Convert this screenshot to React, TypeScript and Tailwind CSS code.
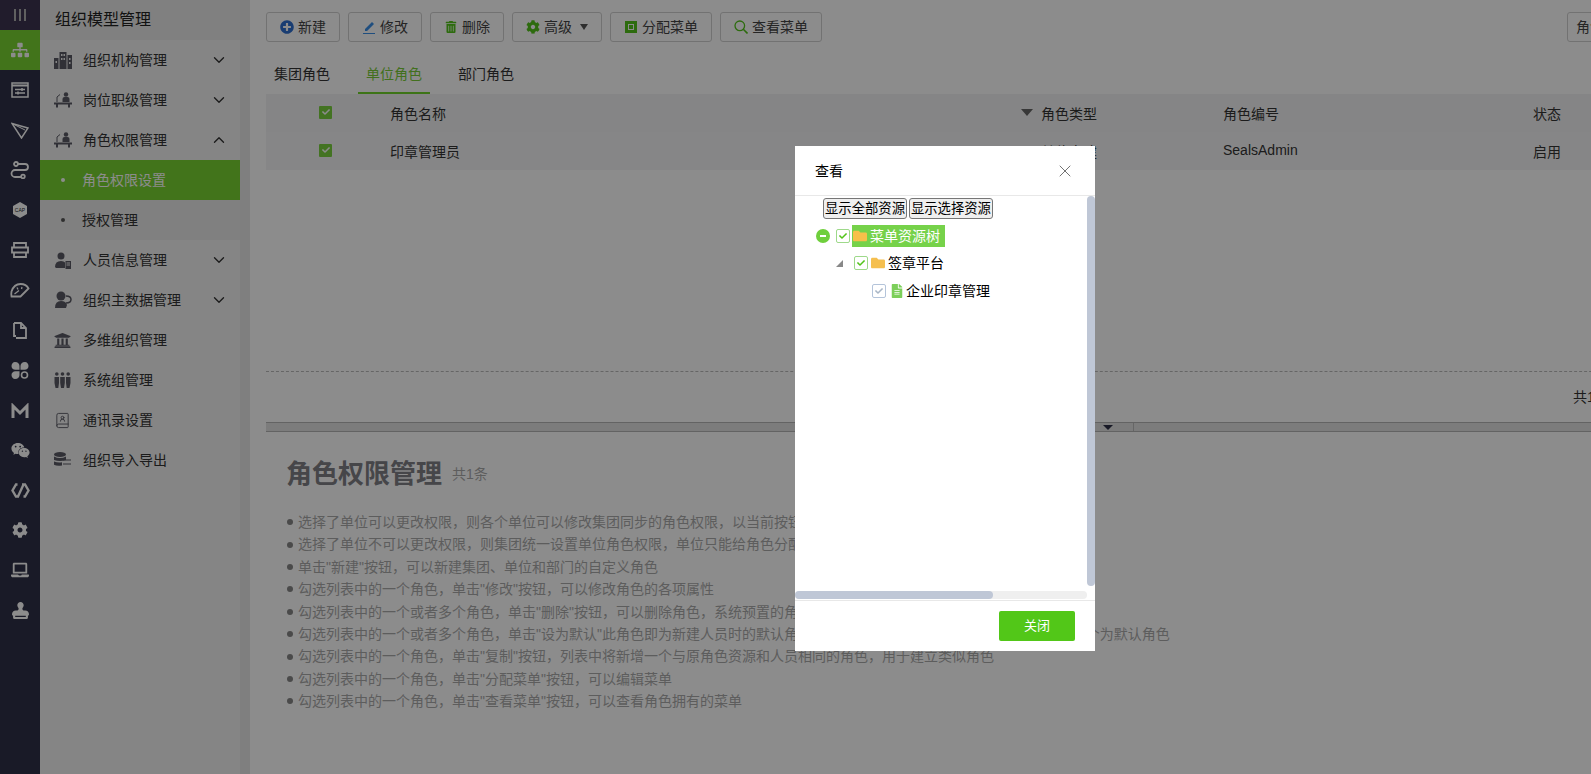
import { ChevronDown, ChevronUp, BookUser, X } from "lucide-react";
import {
  FaSitemap,
  FaWeixin,
  FaCog,
  FaLaptop,
  FaUniversity,
  FaPlusCircle,
  FaTrashAlt,
  FaFolder,
  FaFileAlt,
  FaCheck,
} from "react-icons/fa";
import { FaStamp } from "react-icons/fa6";
import { ReactNode } from "react";

const font = { fontFamily: '"Liberation Sans","Noto Sans CJK SC",sans-serif' };

const Desk = () => (
  <svg width="18" height="16" viewBox="0 0 18 16" fill="currentColor">
    <circle cx="12" cy="2.500" r="2.200" />
    <path d="M8.500 10V7q0-2 2-2h3q2 0 2 2v3z" />
    <path d="M0 10.500h18v2H16v3h-2v-3H4v3H2v-3H0z" />
    <path d="M3 10V5l3-2.500" fill="none" stroke="currentColor" strokeWidth="1" />
  </svg>
);

const Buildings = () => (
  <svg width="18" height="17" viewBox="0 0 18 17" fill="currentColor">
    <path d="M5.500 0h7v17h-7zM0 6h4.500v11H0zM13.500 3H18v14h-4.500z" />
    <path d="M7 2h1.500v2H7zM9.500 2H11v2H9.500zM7 6h1.500v2H7zM9.500 6H11v2H9.500zM1.500 9h1.500v2H1.500zM15 6h1.500v2H15zM15 10h1.500v2H15z" fill="#f2f2f2" />
  </svg>
);

const PersonCard = () => (
  <svg width="17" height="17" viewBox="0 0 17 17" fill="currentColor">
    <circle cx="7" cy="4" r="3.500" />
    <path d="M1 15q0-6 6-6 3 0 4 1.500V16H2z" />
    <path d="M11.500 9H17v8h-5.500z" />
    <path d="M12.500 11h3.500M12.500 13h3.500" stroke="#f2f2f2" strokeWidth="1" />
  </svg>
);

const PersonData = () => (
  <svg width="18" height="18" viewBox="0 0 18 18" fill="currentColor">
    <circle cx="7" cy="5" r="4.500" />
    <path d="M1 17q0-7 6-7 5 0 6 4l-1 3z" />
    <path d="M12 5q5 0 5 3.500T12 12" fill="none" stroke="currentColor" strokeWidth="1.500" />
  </svg>
);

const Team = () => (
  <svg width="17" height="16" viewBox="0 0 17 16" fill="currentColor">
    <circle cx="2.800" cy="2" r="1.800" />
    <circle cx="8.500" cy="2" r="1.800" />
    <circle cx="14.200" cy="2" r="1.800" />
    <path d="M.5 5h4.500v6l-.7 5H1.500l-1-5zM6.200 5h4.600v6l-.8 5H7l-.8-5zM12 5h4.500v6l-1 5h-2.800L12 11z" />
  </svg>
);

const ImportExport = () => (
  <svg width="17" height="16" viewBox="0 0 17 16" fill="currentColor">
    <ellipse cx="6" cy="2.500" rx="6" ry="2.500" />
    <path d="M0 4.500q6 3 12 0V8q-6 2-12 0zM0 9.500q4 1.500 8 .8v3.200q-5 1-8-.8z" />
    <path d="M9 8h8M9 12h8" stroke="currentColor" strokeWidth="1.200" />
  </svg>
);

const railIcons: ReactNode[] = [
  <svg width="18" height="16" viewBox="0 0 18 16" fill="none" stroke="currentColor" strokeWidth="1.500">
    <rect x="1" y="1" width="16" height="14" />
    <path d="M1 3.500h16" strokeWidth="2" />
    <path d="M4 7.500h10M4 11h10" />
    <path d="M11 6v3M7 9.500v3" />
  </svg>,
  <svg width="18" height="17" viewBox="0 0 18 17" fill="none" stroke="currentColor" strokeWidth="1.500">
    <path d="M1 1.500 17 6l-6.500 10z" />
    <path d="M1 1.500 14 8" strokeWidth="1" />
  </svg>,
  <svg width="20" height="18" viewBox="0 0 20 18" fill="none" stroke="currentColor" strokeWidth="1.800">
    <path d="M8 3h7a3 3 0 0 1 0 6H5a3.500 3.500 0 0 0 0 7h6" />
    <circle cx="6" cy="3" r="2" />
    <circle cx="13" cy="15.500" r="1.800" />
  </svg>,
  <svg width="16" height="16" viewBox="0 0 16 16">
    <path d="M8 0l7 4v8l-7 4-7-4V4z" fill="currentColor" />
    <text x="8" y="10" fontSize="5" textAnchor="middle" fill="#1b1c28">CAP</text>
  </svg>,
  <svg width="18" height="16" viewBox="0 0 18 16" fill="none" stroke="currentColor" strokeWidth="1.800">
    <path d="M3 1h12v4.500H3zM1 5.500h16v5H1zM3 10.500h12V15H3z" />
  </svg>,
  <svg width="20" height="16" viewBox="0 0 20 16" fill="none" stroke="currentColor" strokeWidth="1.800">
    <path d="M1.500 14.500q-.5-2 0-5C3 5 6 2 10.500 2c3.500 0 6.500 1.500 8 4.500l-8 8z" />
    <path d="M4.500 12 9 8.500M7 5.500l1 2M12 5l-.5 2" strokeWidth="1.300" />
  </svg>,
  <svg width="14" height="17" viewBox="0 0 14 17" fill="none" stroke="currentColor" strokeWidth="1.800">
    <path d="M1 1h7l5 5v10H3" />
    <path d="M1 1v13h2M8 1v5h5" />
  </svg>,
  <svg width="18" height="17" viewBox="0 0 18 17" fill="currentColor">
    <path d="M4 0c3 0 4.500 2 4.500 4v3.800H4.500C2 7.800.5 6 .5 4S2 0 4 0zM14 0c-3 0-4.500 2-4.500 4v3.800h4c2.500 0 4-1.800 4-3.800S16 0 14 0zM4 17c3 0 4.500-2 4.500-4V9.200H4.500C2 9.200.5 11 .5 13s1.500 4 3.500 4z" />
    <circle cx="13.500" cy="13" r="3" fill="none" stroke="currentColor" strokeWidth="1.600" />
  </svg>,
  <svg width="18" height="15" viewBox="0 0 18 15" fill="none" stroke="currentColor" strokeWidth="3">
    <path d="M2 15V3l7 7 7-7v12" />
  </svg>,
  <FaWeixin size={19} />,
  <svg width="19" height="15" viewBox="0 0 19 15" fill="none" stroke="currentColor" strokeWidth="2.400">
    <path d="M6.500 1.500H5L1.500 7.500 5 13.500h3" />
    <path d="M11 1.500h3l3.500 6-3.500 6h-1.500" />
    <path d="M12.500 1.500 7 13.500" />
  </svg>,
  <FaCog size={16} />,
  <FaLaptop size={18} />,
  <FaStamp size={17} />,
];

type MenuItem = { label: string; icon: ReactNode; arrow?: "down" | "up"; children?: { label: string; active?: boolean }[] };

const menu: MenuItem[] = [
  { label: "组织机构管理", icon: <Buildings />, arrow: "down" },
  { label: "岗位职级管理", icon: <Desk />, arrow: "down" },
  {
    label: "角色权限管理",
    icon: <Desk />,
    arrow: "up",
    children: [{ label: "角色权限设置", active: true }, { label: "授权管理" }],
  },
  { label: "人员信息管理", icon: <PersonCard />, arrow: "down" },
  { label: "组织主数据管理", icon: <PersonData />, arrow: "down" },
  { label: "多维组织管理", icon: <FaUniversity size={17} /> },
  { label: "系统组管理", icon: <Team /> },
  { label: "通讯录设置", icon: <BookUser size={17} strokeWidth={1.3} /> },
  { label: "组织导入导出", icon: <ImportExport /> },
];

const tips = [
  "选择了单位可以更改权限\uFF0C则各个单位可以修改集团同步的角色权限\uFF0C以当前按钮的选择为准",
  "选择了单位不可以更改权限\uFF0C则集团统一设置单位角色权限\uFF0C单位只能给角色分配人员",
  "单击\"新建\"按钮\uFF0C可以新建集团、单位和部门的自定义角色",
  "勾选列表中的一个角色\uFF0C单击\"修改\"按钮\uFF0C可以修改角色的各项属性",
  "勾选列表中的一个或者多个角色\uFF0C单击\"删除\"按钮\uFF0C可以删除角色\uFF0C系统预置的角色不能删除",
  "勾选列表中的一个或者多个角色\uFF0C单击\"设为默认\"此角色即为新建人员时的默认角色\uFF0C每个单位下同一类型的角色中, 只能设置一个为默认角色",
  "勾选列表中的一个角色\uFF0C单击\"复制\"按钮\uFF0C列表中将新增一个与原角色资源和人员相同的角色\uFF0C用于建立类似角色",
  "勾选列表中的一个角色\uFF0C单击\"分配菜单\"按钮\uFF0C可以编辑菜单",
  "勾选列表中的一个角色\uFF0C单击\"查看菜单\"按钮\uFF0C可以查看角色拥有的菜单",
];

const ToolButton = ({ icon, label, caret }: { icon: ReactNode; label: string; caret?: boolean }) => (
  <button className="flex h-[30px] items-center gap-1 rounded-[3px] border border-[#d0d0d0] bg-white px-[13px] text-sm leading-none text-[#444]">
    <span className="flex w-[14px] justify-center">{icon}</span>
    {label}
    {caret && <span className="ml-1 h-0 w-0 border-x-4 border-t-[6px] border-x-transparent border-t-[#555]" />}
  </button>
);

const TableCheck = () => (
  <span className="-mt-1 ml-[53px] flex h-[13px] w-[13px] items-center justify-center rounded-[1px] bg-[#7ad13f] text-white">
    <FaCheck size={8} />
  </span>
);

const TreeCheck = ({ muted }: { muted?: boolean }) => (
  <span
    className={
      muted
        ? "flex h-[14px] w-[14px] shrink-0 items-center justify-center rounded-[2px] border border-[#b4c4da] bg-white text-[#a9b6c6]"
        : "flex h-[14px] w-[14px] shrink-0 items-center justify-center rounded-[2px] border border-[#9ed98a] bg-white text-[#52c41a]"
    }
  >
    <FaCheck size={8} />
  </span>
);

const App = () => {
  return (
    <div className="relative flex h-[774px] w-[1591px] overflow-hidden bg-white text-sm" style={font}>
      {/* left rail */}
      <aside className="flex w-10 shrink-0 flex-col bg-[#2f3147] text-white">
        <div className="flex h-[30px] items-center justify-center gap-[3px] bg-[#3d3350]">
          <span className="h-3 w-[2px] bg-[#b0b0b0]" />
          <span className="h-3 w-[2px] bg-[#b0b0b0]" />
          <span className="h-3 w-[2px] bg-[#b0b0b0]" />
        </div>
        <div className="flex h-10 items-center justify-center bg-[#78d432]">
          <FaSitemap size={18} />
        </div>
        {railIcons.map((icon, i) => (
          <div key={i} className="flex h-10 items-center justify-center">
            {icon}
          </div>
        ))}
      </aside>

      {/* menu */}
      <aside className="w-[200px] shrink-0 bg-[#f2f2f2] text-[#333]">
        <div className="flex h-10 items-center bg-[#e9e9e9] pl-[15px] text-base text-[#222]">组织模型管理</div>
        {menu.map((item) => (
          <div key={item.label}>
            <div className="flex h-10 items-center pl-[14px] pr-[12px]">
              <span className="flex w-[29px] shrink-0 text-[#5a5a64]">{item.icon}</span>
              <span>{item.label}</span>
              {item.arrow === "down" && <ChevronDown size={18} strokeWidth={1.8} className="ml-auto" />}
              {item.arrow === "up" && <ChevronUp size={18} strokeWidth={1.8} className="ml-auto" />}
            </div>
            {item.children?.map((sub) => (
              <div
                key={sub.label}
                className={
                  sub.active
                    ? "flex h-10 items-center bg-[#78d432] pl-[21px] text-white"
                    : "flex h-10 items-center bg-[#e9e9e9] pl-[21px] text-[#333]"
                }
              >
                <span className={sub.active ? "mr-[17px] h-1 w-1 rounded-full bg-white" : "mr-[17px] h-1 w-1 rounded-full bg-[#555]"} />
                {sub.label}
              </div>
            ))}
          </div>
        ))}
      </aside>
      <div className="w-[10px] shrink-0 bg-[#e7e7e7]" />

      {/* content */}
      <main className="min-w-0 flex-1 overflow-hidden">
        <div className="w-[1417px]">
          <div className="ml-4 flex items-center gap-2 pt-3">
            <ToolButton icon={<FaPlusCircle size={14} className="text-[#2f6fd0]" />} label="新建" />
            <ToolButton
              icon={
                <svg width="14" height="14" viewBox="0 0 14 14" fill="#3a8ee8">
                  <path d="M3 9 10 2l2 2-7 7H3zM1 13h12v1H1z" />
                </svg>
              }
              label="修改"
            />
            <ToolButton icon={<FaTrashAlt size={12} className="text-[#52c41a]" />} label="删除" />
            <ToolButton icon={<FaCog size={14} className="text-[#52c41a]" />} label="高级" caret />
            <ToolButton
              icon={
                <span className="flex h-3 w-3 items-center justify-center bg-[#52c41a]">
                  <span className="h-[6px] w-[6px] border border-white" />
                </span>
              }
              label="分配菜单"
            />
            <ToolButton
              icon={
                <svg width="14" height="14" viewBox="0 0 14 14" fill="none" stroke="#52c41a" strokeWidth="1.300">
                  <circle cx="5.800" cy="5.800" r="4.800" />
                  <path d="M9.300 9.300 13.500 13.500" strokeWidth="1.600" />
                </svg>
              }
              label="查看菜单"
            />
            <div className="ml-auto flex h-[30px] w-[100px] items-center rounded-[3px] border border-[#d0d0d0] px-2 text-[#444]">角色名称</div>
          </div>

          <div className="ml-4 mt-[14px] flex h-[38px] text-[#333]">
            <div className="flex w-[92px] items-center pb-[2px] pl-2">集团角色</div>
            <div className="flex w-[72px] items-center justify-center border-b-2 border-[#6fd32a] text-[#78cc38]">单位角色</div>
            <div className="flex items-center pb-[2px] pl-7">部门角色</div>
          </div>

          <div className="ml-4 border-b border-dashed border-[#bbb]">
            <div className="grid h-[38px] grid-cols-[124px_651px_182px_310px_1fr] items-center bg-[#f3f3f4] pt-[2px] text-[#333]">
              <TableCheck />
              <span className="flex items-center justify-between pr-[8px]">
                角色名称
                <span className="-mt-1 h-0 w-0 border-x-[6px] border-t-[7px] border-x-transparent border-t-[#666]" />
              </span>
              <span>角色类型</span>
              <span>角色编号</span>
              <span>状态</span>
            </div>
            <div className="grid h-[38px] grid-cols-[124px_651px_182px_310px_1fr] items-center bg-[#f5f5f6] pt-[2px] text-[#333]">
              <TableCheck />
              <span>印章管理员</span>
              <span>单位自建</span>
              <span className="-mt-1">SealsAdmin</span>
              <span className="-mt-[1px]">启用</span>
            </div>
            <div className="h-[201px]" />
          </div>

          <div className="ml-4 flex h-[50px] items-center pl-[1307px] text-[#333]">共1条</div>

          <div className="ml-4 flex h-[10px] items-center border-y border-[#b5b5b5] bg-[#e2e2e2] pl-[837px]">
            <span className="h-0 w-0 border-x-[5px] border-t-[5px] border-x-transparent border-t-[#2f3147]" />
            <span className="ml-[20px] h-full w-[1px] bg-[#bbb]" />
          </div>

          <div className="ml-[36px] mt-[24px] flex h-9 items-center">
            <h1 className="text-[26px] font-bold leading-9 text-[#808086]">角色权限管理</h1>
            <span className="ml-[10px] text-[#aaa]">共1条</span>
          </div>

          <ul className="ml-[37px] mt-[19px] text-[#aaa]">
            {tips.map((tip) => (
              <li key={tip} className="flex h-[22.4px] items-center leading-[22.4px]">
                <span className="mr-[5px] h-[6px] w-[6px] shrink-0 rounded-full bg-[#888]" />
                {tip}
              </li>
            ))}
          </ul>
        </div>
      </main>

      {/* mask */}
      <div className="absolute inset-0 bg-black/45" />

      {/* dialog */}
      <div className="absolute left-[795px] top-[146px] flex h-[505px] w-[300px] flex-col bg-white text-black">
        <div className="flex h-[50px] shrink-0 items-center justify-between border-b border-[#e8e8e8] pl-5 pr-[20px]">
          <span>查看</span>
          <X size={20} strokeWidth={1} className="text-[#555]" />
        </div>
        <div className="relative flex-1 overflow-hidden">
          <div className="pl-7 pt-[2px]">
            <div className="flex gap-[2px]">
              <button className="h-[21px] rounded-[3px] border border-[#767676] bg-[#efefef] px-[1px] text-[13.33px] leading-none">显示全部资源</button>
              <button className="h-[21px] rounded-[3px] border border-[#767676] bg-[#efefef] px-[1px] text-[13.33px] leading-none">显示选择资源</button>
            </div>
          </div>
          <div className="mt-[6px] flex h-[22px] items-center pl-[21px]">
            <span className="flex h-[14px] w-[14px] items-center justify-center rounded-full bg-[#6fcf3c]">
              <span className="h-[2px] w-[6px] bg-white" />
            </span>
            <span className="ml-[6px]"><TreeCheck /></span>
            <span className="ml-[2px] flex h-[22px] w-[93px] items-center gap-[3px] bg-[#76d24a] pl-[1px] text-white">
              <FaFolder size={14} className="text-[#f7c04a]" />
              菜单资源树
            </span>
          </div>
          <div className="mt-[5px] flex h-[22px] items-center pl-[41px]">
            <span className="h-0 w-0 border-b-[7px] border-l-[7px] border-b-[#888] border-l-transparent" />
            <span className="ml-[11px]"><TreeCheck /></span>
            <FaFolder size={14} className="ml-[3px] text-[#f5bf4f]" />
            <span className="ml-[3px]">签章平台</span>
          </div>
          <div className="mt-[6px] flex h-[22px] items-center pl-[77px]">
            <TreeCheck muted />
            <FaFileAlt size={14} className="ml-[4px] text-[#7ccf5a]" />
            <span className="ml-[2px]">企业印章管理</span>
          </div>

          {/* scrollbars */}
          <div className="absolute right-0 top-0 h-[390px] w-2 rounded-full bg-[#bfc7d6]" />
          <div className="absolute bottom-[1px] left-0 h-2 w-[292px] rounded-full bg-[#efefef]" />
          <div className="absolute bottom-[1px] left-0 h-2 w-[198px] rounded-full bg-[#bfc7d6]" />
        </div>
        <div className="flex h-[51px] shrink-0 items-start justify-end border-t border-[#e8e8e8] pr-5 pt-[10px]">
          <button className="h-[30px] w-[76px] rounded-[2px] bg-[#52c718] text-[13px] text-white">关闭</button>
        </div>
      </div>
    </div>
  );
};

export default App;
